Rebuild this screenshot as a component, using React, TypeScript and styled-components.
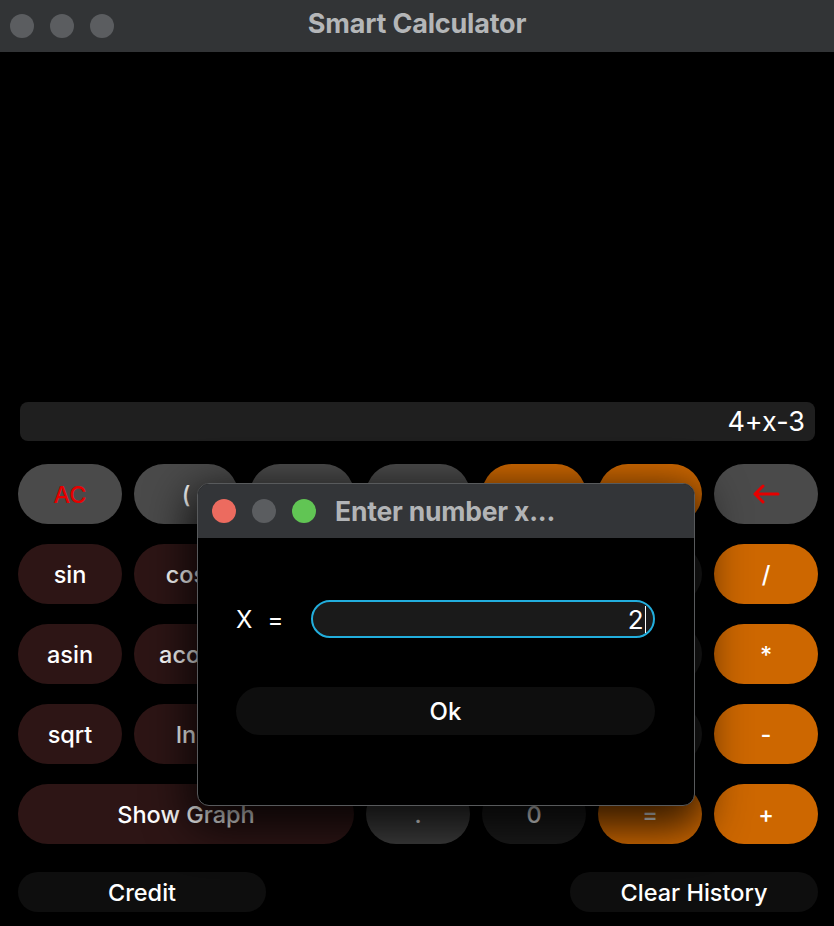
import React from "react";
import styled, { createGlobalStyle, css } from "styled-components";

const GlobalStyle = createGlobalStyle`
  html, body { margin: 0; padding: 0; background: #000; }
  body { font-family: Inter, "Noto Sans", "Liberation Sans", sans-serif; }
  * { box-sizing: border-box; }
`;

const Window = styled.div`
  position: relative;
  width: 834px;
  height: 926px;
  background: #000;
  display: flex;
  flex-direction: column;
  overflow: hidden;
`;

const TitleBar = styled.div`
  position: relative;
  height: 52px;
  flex: none;
  background: #323436;
  display: flex;
  align-items: center;
  justify-content: center;
  padding-bottom: 6px;
`;

const Lights = styled.div<{ $left: number; $gap: number }>`
  position: absolute;
  left: ${(p) => p.$left}px;
  top: 0;
  bottom: 0;
  display: flex;
  align-items: center;
  gap: ${(p) => p.$gap}px;
`;

const Light = styled.span<{ $color: string }>`
  width: 24px;
  height: 24px;
  border-radius: 50%;
  background: ${(p) => p.$color};
`;

const WindowTitle = styled.div`
  font-size: 27px;
  font-weight: 700;
  color: #b4b6b8;
  letter-spacing: -0.2px;
`;

const Body = styled.div`
  flex: 1;
  display: flex;
  flex-direction: column;
  padding: 0 16px 0 18px;
`;

const History = styled.div`
  height: 350px;
  flex: none;
`;

const Display = styled.div`
  height: 39px;
  margin: 0 3px 0 2px;
  background: #1f1f1f;
  border-radius: 8px;
  display: flex;
  align-items: center;
  justify-content: flex-end;
  padding-right: 10px;
  color: #fff;
  font-size: 27px;
`;

const Keypad = styled.div`
  margin-top: 23px;
  display: grid;
  grid-template-columns: repeat(7, 104px);
  grid-auto-rows: 60px;
  gap: 20px 12px;
`;

type Variant = "gray" | "orange" | "maroon" | "dark" | "dot";

const variants: Record<Variant, ReturnType<typeof css>> = {
  gray: css`background: #4a4a4a; color: #fff;`,
  orange: css`background: #cd6700; color: #fff;`,
  maroon: css`background: #2d1515; color: #fff;`,
  dark: css`background: #1b1b1b; color: #fff;`,
  dot: css`background: #3c3c3c; color: #fff;`,
};

const Key = styled.div<{ $v: Variant; $span?: number; $red?: boolean }>`
  ${(p) => variants[p.$v]}
  ${(p) => p.$red && css`color: #e60000;`}
  grid-column: span ${(p) => p.$span ?? 1};
  border-radius: 30px;
  display: flex;
  align-items: center;
  justify-content: center;
  font-size: 23.5px;
  font-weight: 500;
`;

const Footer = styled.div`
  margin-top: 28px;
  display: flex;
  justify-content: space-between;
`;

const FooterButton = styled.div`
  width: 248px;
  height: 40px;
  border-radius: 20px;
  background: #0e0e0e;
  color: #fff;
  font-size: 23.5px;
  font-weight: 500;
  display: flex;
  align-items: center;
  justify-content: center;
`;

const Dialog = styled.div`
  position: absolute;
  left: 197px;
  top: 483px;
  width: 498px;
  height: 323px;
  border-radius: 12px;
  background: #000;
  border: 1px solid #585a5c;
  overflow: hidden;
  box-shadow: 0 14px 44px 8px rgba(0, 0, 0, 0.78);
  display: flex;
  flex-direction: column;
`;

const DialogTitleBar = styled.div`
  position: relative;
  height: 54px;
  flex: none;
  background: #333538;
  display: flex;
  align-items: center;
  padding-left: 137px;
`;

const DialogTitle = styled.div`
  font-size: 26.5px;
  font-weight: 700;
  color: #b2b4b6;
  letter-spacing: -0.2px;
`;

const DialogBody = styled.div`
  padding: 62px 39px 0 38px;
  display: flex;
  flex-direction: column;
  gap: 49px;
`;

const InputRow = styled.div`
  display: flex;
  align-items: center;
  height: 38px;
`;

const Label = styled.div`
  width: 75px;
  display: flex;
  gap: 15px;
  color: #fff;
  font-size: 24px;
`;

const Field = styled.div`
  flex: 1;
  height: 38px;
  border: 2.5px solid #22aedd;
  border-radius: 19px;
  background: #1a1a1a;
  display: flex;
  align-items: center;
  justify-content: flex-end;
  padding-right: 7px;
  color: #fff;
  font-size: 26px;
`;

const Caret = styled.span`
  width: 1.5px;
  height: 27px;
  background: #fff;
  margin-left: 1px;
`;

const OkButton = styled.div`
  height: 48px;
  border-radius: 24px;
  background: #0e0e0e;
  color: #fff;
  font-size: 24px;
  font-weight: 500;
  display: flex;
  align-items: center;
  justify-content: center;
`;

const BackArrow = () => (
  <svg width="28" height="20" viewBox="0 0 28 20" fill="none">
    <path d="M26 10H3M11 2L3 10L11 18" stroke="#e60000" strokeWidth="3" strokeLinecap="round" strokeLinejoin="round" />
  </svg>
);

type KeyDef = { label?: React.ReactNode; v: Variant; span?: number; red?: boolean };

/* Keys whose labels sit fully under the modal dialog are left without text. */
const keys: KeyDef[] = [
  { label: "AC", v: "gray", red: true },
  { label: "(", v: "gray" },
  { v: "gray" },
  { v: "gray" },
  { v: "orange" },
  { v: "orange" },
  { label: <BackArrow />, v: "gray" },
  { label: "sin", v: "maroon" },
  { label: "cos", v: "maroon" },
  { v: "maroon" },
  { v: "dark" },
  { v: "dark" },
  { v: "dark" },
  { label: "/", v: "orange" },
  { label: "asin", v: "maroon" },
  { label: "acos", v: "maroon" },
  { v: "maroon" },
  { v: "dark" },
  { v: "dark" },
  { v: "dark" },
  { label: "*", v: "orange" },
  { label: "sqrt", v: "maroon" },
  { label: "ln", v: "maroon" },
  { v: "maroon" },
  { v: "dark" },
  { v: "dark" },
  { v: "dark" },
  { label: "-", v: "orange" },
  { label: "Show Graph", v: "maroon", span: 3 },
  { label: ".", v: "dot" },
  { label: "0", v: "dark" },
  { label: "=", v: "orange" },
  { label: "+", v: "orange" },
];

export default function App() {
  return (
    <>
      <GlobalStyle />
      <Window>
        <TitleBar>
          <Lights $left={10} $gap={16}>
            <Light $color="#5b5d60" />
            <Light $color="#5b5d60" />
            <Light $color="#5b5d60" />
          </Lights>
          <WindowTitle>Smart Calculator</WindowTitle>
        </TitleBar>
        <Body>
          <History />
          <Display>4+x-3</Display>
          <Keypad>
            {keys.map((k, i) => (
              <Key key={i} $v={k.v} $span={k.span} $red={k.red}>
                {k.label}
              </Key>
            ))}
          </Keypad>
          <Footer>
            <FooterButton>Credit</FooterButton>
            <FooterButton>Clear History</FooterButton>
          </Footer>
        </Body>
        <Dialog>
          <DialogTitleBar>
            <Lights $left={14} $gap={16}>
              <Light $color="#ec6b5f" />
              <Light $color="#5b5d60" />
              <Light $color="#61c554" />
            </Lights>
            <DialogTitle>Enter number x...</DialogTitle>
          </DialogTitleBar>
          <DialogBody>
            <InputRow>
              <Label>
                <span>X</span>
                <span>=</span>
              </Label>
              <Field>
                2<Caret />
              </Field>
            </InputRow>
            <OkButton>Ok</OkButton>
          </DialogBody>
        </Dialog>
      </Window>
    </>
  );
}
